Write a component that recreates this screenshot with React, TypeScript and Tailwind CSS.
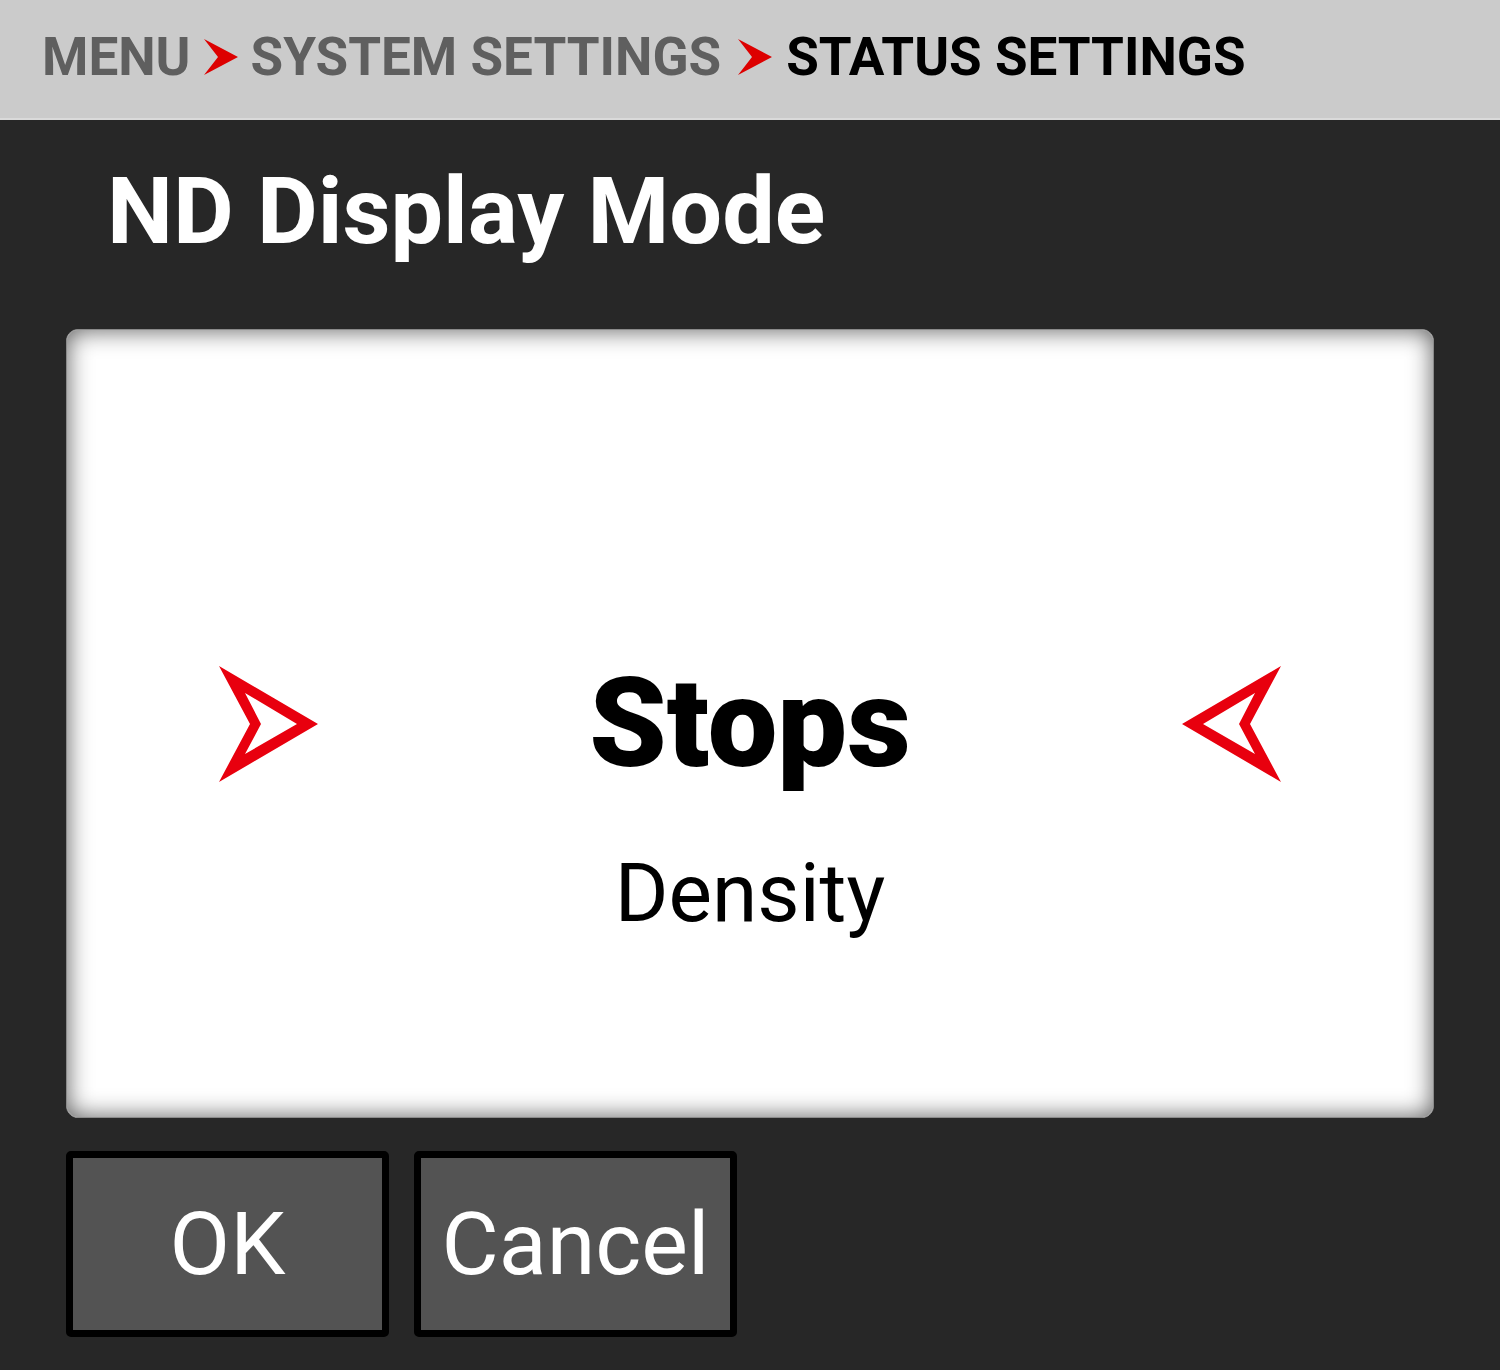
import React from "react";

function CrumbArrow() {
  return (
    <svg width="34" height="36" viewBox="0 0 34 36" className="shrink-0">
      <path d="M0 0 L34 18 L0 36 L14 18 Z" fill="#dd0000" />
    </svg>
  );
}

function BigArrow({ flip }: { flip?: boolean }) {
  return (
    <svg
      width="100"
      height="116"
      viewBox="0 0 100 116"
      className="shrink-0"
      style={flip ? { transform: "scaleX(-1)" } : undefined}
    >
      <path
        fillRule="evenodd"
        d="M1 0 L100 58 L1 116 L32 58 Z M27 27 L79 58 L27 88 L43 58 Z"
        fill="#e8000e"
      />
    </svg>
  );
}

export default function App() {
  return (
    <div
      className="w-[1500px] h-[1370px] bg-[#272727] flex flex-col overflow-hidden"
      style={{ fontFamily: "Roboto, 'Noto Sans', sans-serif" }}
    >
      <div className="h-[120px] bg-[#cbcbcb] border-b-2 border-[#dadada] flex items-center pl-[42px] pb-[4px]">
        <span className="text-[53px] font-bold text-[#5f5f5f] leading-none">MENU</span>
        <span className="ml-[13px] mr-[13px] flex"><CrumbArrow /></span>
        <span className="text-[53px] font-bold text-[#5f5f5f] leading-none">SYSTEM SETTINGS</span>
        <span className="ml-[17px] mr-[14px] flex"><CrumbArrow /></span>
        <span className="text-[53px] font-bold text-black leading-none">STATUS SETTINGS</span>
      </div>

      <div className="pl-[107px] mt-[45px] h-[95px] text-[93.5px] font-bold text-white leading-none">
        ND Display Mode
      </div>

      <div className="mx-[66px] mt-[69px] h-[789px] bg-white rounded-[12px] border border-[#8a8a8a] shadow-[inset_0_0_24px_rgba(0,0,0,0.65)] flex flex-col items-center pt-[331px]">
        <div className="w-full flex items-center justify-between px-[151px] h-[126px]">
          <BigArrow />
          <span className="text-[124px] font-black text-black leading-none">Stops</span>
          <BigArrow flip />
        </div>
        <div className="mt-[65px] text-[82px] text-black leading-none">Density</div>
      </div>

      <div className="flex gap-[25px] ml-[66px] mt-[33px]">
        <div className="w-[323px] h-[186px] border-[7px] border-black rounded-[5px] bg-[#535353] flex items-center justify-center text-white text-[88px] leading-none">
          OK
        </div>
        <div className="w-[323px] h-[186px] border-[7px] border-black rounded-[5px] bg-[#535353] flex items-center justify-center text-white text-[88px] leading-none">
          Cancel
        </div>
      </div>
    </div>
  );
}
